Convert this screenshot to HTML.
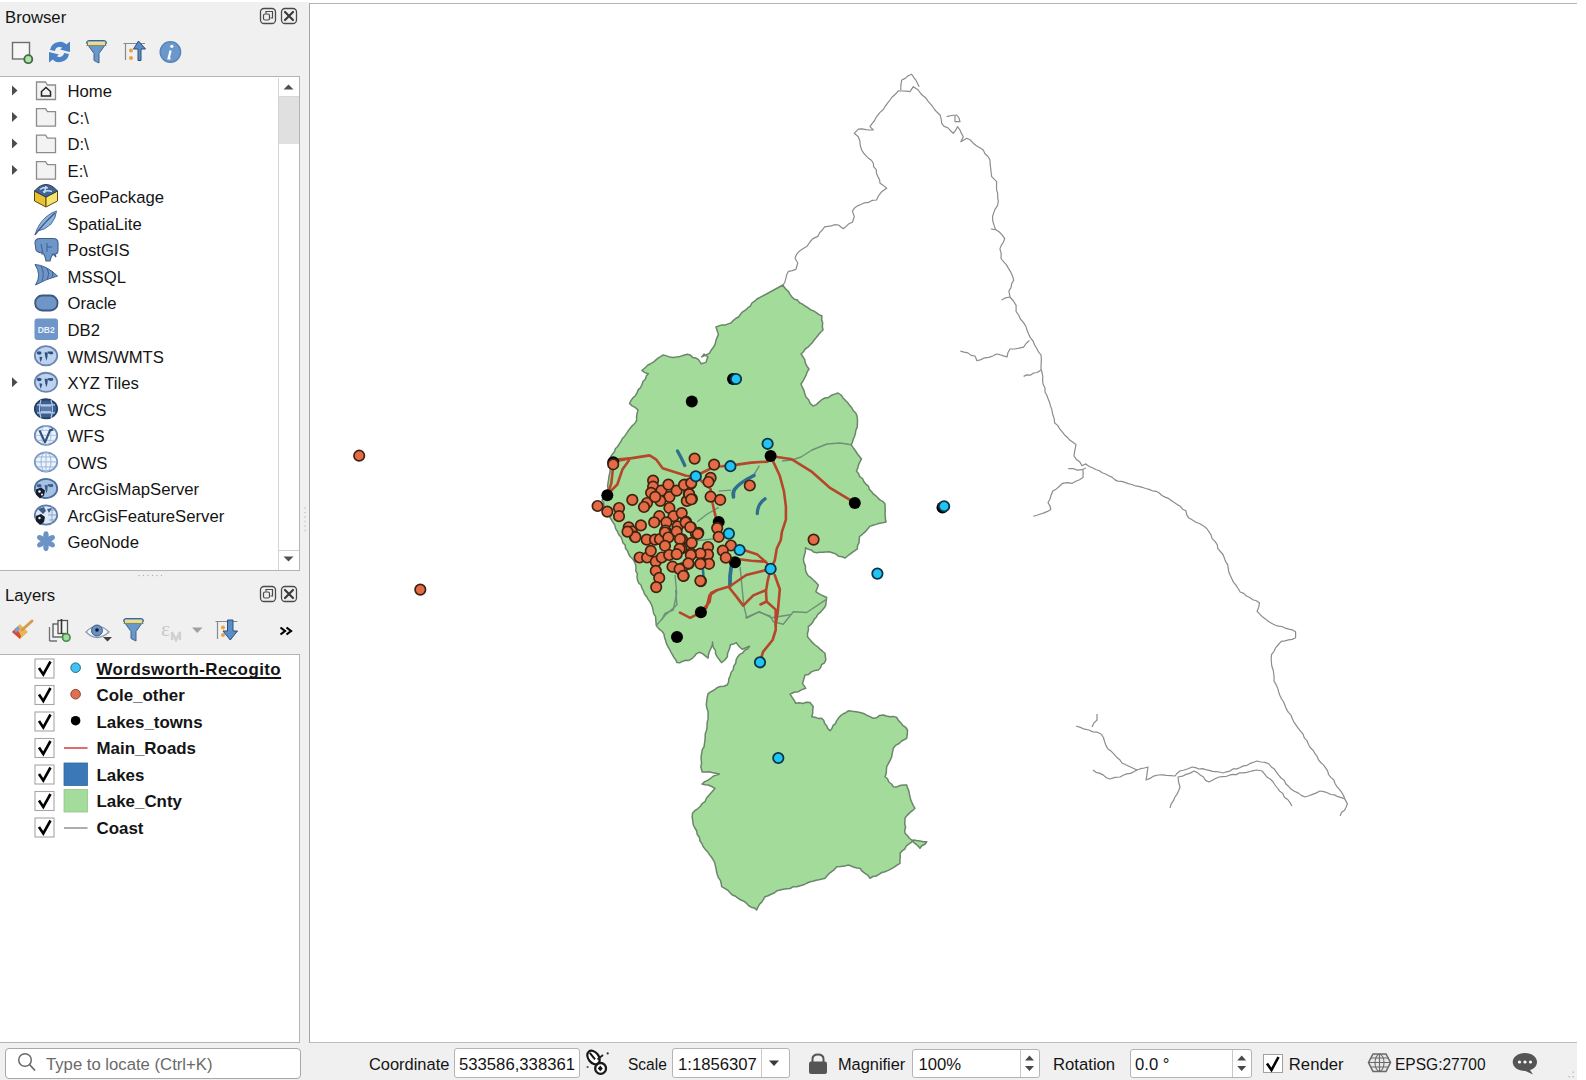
<!DOCTYPE html>
<html><head><meta charset="utf-8">
<style>
html,body{margin:0;padding:0;}
body{width:1586px;height:1080px;position:relative;overflow:hidden;background:#fff;font-family:"Liberation Sans",sans-serif;color:#141414;}
.a{position:absolute;}
.t{position:absolute;font-size:16.7px;line-height:20px;white-space:nowrap;}
.b{font-weight:bold;font-size:16.9px;}
svg{position:absolute;left:0;top:0;}
</style></head><body>
<div class="a" style="left:0;top:2px;width:309px;height:1078px;background:#f0f0f0"></div>
<div class="a" style="left:0;top:1043px;width:1577px;height:37px;background:#f0f0f0"></div>
<div class="a" style="left:309px;top:3px;width:1268px;height:1039.5px;background:#fff;border-left:1.5px solid #a6a6a6;border-top:1.8px solid #b4b4b4;border-bottom:1.8px solid #bcbcbc;box-sizing:border-box"></div>

<div class="t" style="left:5px;top:7.5px">Browser</div>
<div class="a" style="left:0;top:76px;width:300px;height:495px;background:#fff;border:1.5px solid #b4b4b4;border-left:none;box-sizing:border-box"></div>
<div class="a" style="left:278px;top:77.5px;width:20.5px;height:492px;background:#fff;border-left:1px solid #d4d4d4;box-sizing:border-box"></div>
<div class="a" style="left:279px;top:96px;width:19.5px;height:48px;background:#e0e0e0"></div>
<div class="a" style="left:279px;top:549.5px;width:19.5px;height:1px;background:#d0d0d0"></div>
<div class="a" style="left:279px;top:96px;width:19.5px;height:1px;background:#d8d8d8"></div>
<div class="t" style="left:67.5px;top:82.20px">Home</div>
<div class="t" style="left:67.5px;top:108.73px">C:\</div>
<div class="t" style="left:67.5px;top:135.26px">D:\</div>
<div class="t" style="left:67.5px;top:161.79px">E:\</div>
<div class="t" style="left:67.5px;top:188.32px">GeoPackage</div>
<div class="t" style="left:67.5px;top:214.85px">SpatiaLite</div>
<div class="t" style="left:67.5px;top:241.38px">PostGIS</div>
<div class="t" style="left:67.5px;top:267.91px">MSSQL</div>
<div class="t" style="left:67.5px;top:294.44px">Oracle</div>
<div class="t" style="left:67.5px;top:320.97px">DB2</div>
<div class="t" style="left:67.5px;top:347.50px">WMS/WMTS</div>
<div class="t" style="left:67.5px;top:374.03px">XYZ Tiles</div>
<div class="t" style="left:67.5px;top:400.56px">WCS</div>
<div class="t" style="left:67.5px;top:427.09px">WFS</div>
<div class="t" style="left:67.5px;top:453.62px">OWS</div>
<div class="t" style="left:67.5px;top:480.15px">ArcGisMapServer</div>
<div class="t" style="left:67.5px;top:506.68px">ArcGisFeatureServer</div>
<div class="t" style="left:67.5px;top:533.21px">GeoNode</div>
<div class="t" style="left:5px;top:585.5px">Layers</div>
<div class="a" style="left:0;top:654px;width:300px;height:389px;background:#fff;border:1.5px solid #b4b4b4;border-left:none;box-sizing:border-box"></div>
<div class="t b" style="left:96.5px;top:659.80px;text-decoration:underline;text-decoration-thickness:1.5px;text-underline-offset:1.5px;text-decoration-skip-ink:none;letter-spacing:0.45px;">Wordsworth-Recogito</div>
<div class="t b" style="left:96.5px;top:686.30px;">Cole_other</div>
<div class="t b" style="left:96.5px;top:712.80px;">Lakes_towns</div>
<div class="t b" style="left:96.5px;top:739.30px;">Main_Roads</div>
<div class="t b" style="left:96.5px;top:765.80px;">Lakes</div>
<div class="t b" style="left:96.5px;top:792.30px;">Lake_Cnty</div>
<div class="t b" style="left:96.5px;top:818.80px;">Coast</div>
<div class="a" style="left:5px;top:1048px;width:296px;height:31px;background:#fff;border:1.5px solid #a8a8a8;border-radius:4px;box-sizing:border-box"></div>
<div class="t" style="left:46px;top:1055px;color:#6a6a6a">Type to locate (Ctrl+K)</div>
<div class="t" style="left:368.5px;top:1055px;transform:scaleX(0.984);transform-origin:0 0">Coordinate</div>
<div class="a" style="left:453.5px;top:1048px;width:126px;height:30px;background:#fff;border:1.3px solid #b4b4b4;border-radius:3px;box-sizing:border-box"></div>
<div class="t" style="left:459px;top:1055px">533586,338361</div>
<div class="t" style="left:627.5px;top:1055px;transform:scaleX(0.93);transform-origin:0 0">Scale</div>
<div class="a" style="left:672px;top:1048px;width:118px;height:30px;background:#fff;border:1.3px solid #b4b4b4;border-radius:3px;box-sizing:border-box"></div>
<div class="a" style="left:761px;top:1049px;width:1px;height:28px;background:#c8c8c8"></div>
<div class="t" style="left:678px;top:1055px">1:1856307</div>
<div class="t" style="left:838px;top:1055px;transform:scaleX(0.98);transform-origin:0 0">Magnifier</div>
<div class="a" style="left:911.5px;top:1049px;width:128px;height:29px;background:#fff;border:1.3px solid #b4b4b4;border-radius:3px;box-sizing:border-box"></div>
<div class="a" style="left:1019.5px;top:1050px;width:1px;height:27px;background:#c8c8c8"></div>
<div class="t" style="left:918.5px;top:1055px">100%</div>
<div class="t" style="left:1053px;top:1055px">Rotation</div>
<div class="a" style="left:1130px;top:1048.5px;width:122px;height:29.5px;background:#fff;border:1.3px solid #b4b4b4;border-radius:3px;box-sizing:border-box"></div>
<div class="a" style="left:1231.5px;top:1049.5px;width:1px;height:27.5px;background:#c8c8c8"></div>
<div class="t" style="left:1135px;top:1055px">0.0 °</div>
<div class="a" style="left:1263px;top:1054px;width:19.5px;height:19px;background:#fff;border:1.3px solid #a0a0a0;box-sizing:border-box"></div>
<div class="t" style="left:1288.8px;top:1055px">Render</div>
<div class="t" style="left:1395px;top:1055px;transform:scaleX(0.93);transform-origin:0 0">EPSG:27700</div>
<svg width="1586" height="1080" viewBox="0 0 1586 1080">
<rect x="260.5" y="8.5" width="15" height="15" rx="3.5" fill="none" stroke="#4a4a4a" stroke-width="1.3"/>
<rect x="263.5" y="14" width="6" height="6" rx="1.5" fill="none" stroke="#4a4a4a" stroke-width="1.2"/>
<path d="M266 13.5 v-2 h6.5 v6.5 h-2" fill="none" stroke="#4a4a4a" stroke-width="1.2"/>
<rect x="281.5" y="8.5" width="15" height="15" rx="3.5" fill="none" stroke="#4a4a4a" stroke-width="1.3"/>
<path d="M285 12 l8 8 M293 12 l-8 8" stroke="#3a3a3a" stroke-width="2.2" stroke-linecap="round"/>
<rect x="260.5" y="586.5" width="15" height="15" rx="3.5" fill="none" stroke="#4a4a4a" stroke-width="1.3"/>
<rect x="263.5" y="592" width="6" height="6" rx="1.5" fill="none" stroke="#4a4a4a" stroke-width="1.2"/>
<path d="M266 591.5 v-2 h6.5 v6.5 h-2" fill="none" stroke="#4a4a4a" stroke-width="1.2"/>
<rect x="281.5" y="586.5" width="15" height="15" rx="3.5" fill="none" stroke="#4a4a4a" stroke-width="1.3"/>
<path d="M285 590 l8 8 M293 590 l-8 8" stroke="#3a3a3a" stroke-width="2.2" stroke-linecap="round"/>
<rect x="12.5" y="42.5" width="17" height="16.5" fill="#f6f6f6" stroke="#6e6e6e" stroke-width="1.4"/>
<circle cx="28.3" cy="59.2" r="4" fill="#b4e0b0" stroke="#3e6e40" stroke-width="1.8"/>
<path d="M52.5 50.5 A7.2 7.2 0 0 1 65.5 47.5" fill="none" stroke="#4a82c4" stroke-width="5"/>
<path d="M70 41.5 L70 52 L60 49.5 Z" fill="#4a82c4"/>
<path d="M66.5 53.5 A7.2 7.2 0 0 1 53.5 56.5" fill="none" stroke="#4a82c4" stroke-width="5"/>
<path d="M49 62.5 L49 52 L59 54.5 Z" fill="#4a82c4"/>
<path d="M86.5 43.0 Q86.5 40.5 89 40.5 H104 Q106.5 40.5 106.5 43.0 L99 53.5 V63.0 L94 60.5 V53.5 Z" fill="#6a98c8" stroke="#41638f" stroke-width="1"/>
<rect x="88" y="41.7" width="17" height="3.2" fill="#e8e090"/>
<path d="M86.5 45.5 H106.5" stroke="#8a8a5a" stroke-width="1"/>
<path d="M123.5 621.0 Q123.5 618.5 126 618.5 H141 Q143.5 618.5 143.5 621.0 L136 631.5 V641.0 L131 638.5 V631.5 Z" fill="#6a98c8" stroke="#41638f" stroke-width="1"/>
<rect x="125" y="619.7" width="17" height="3.2" fill="#e8e090"/>
<path d="M123.5 623.5 H143.5" stroke="#8a8a5a" stroke-width="1"/>
<path d="M123.5 43.5 H145 M125.5 43.5 V60" stroke="#8a8a8a" stroke-width="1.2" fill="none"/>
<circle cx="131" cy="50.5" r="2" fill="#e8a040"/><circle cx="131" cy="58" r="2" fill="#e8a040"/>
<path d="M138 60.5 V49 H133.5 L138.5 41 L145.5 49 H141 V60.5 Z" fill="#5a8cc8" stroke="#2e4e78" stroke-width="1"/>
<circle cx="170.4" cy="52" r="10.3" fill="#6a98cc" stroke="#5580b4" stroke-width="1.2"/>
<circle cx="171.8" cy="46.3" r="1.6" fill="#fff"/><path d="M170.6 50.5 L168.6 58.5 M167.5 58.5 H170.5" stroke="#fff" stroke-width="2.2"/>
<path d="M12 85.5 L17.5 90.5 L12 95.5 Z" fill="#4c4c4c"/>
<path d="M12 112.03 L17.5 117.03 L12 122.03 Z" fill="#4c4c4c"/>
<path d="M12 138.56 L17.5 143.56 L12 148.56 Z" fill="#4c4c4c"/>
<path d="M12 165.09 L17.5 170.09 L12 175.09 Z" fill="#4c4c4c"/>
<path d="M12 377.33000000000004 L17.5 382.33000000000004 L12 387.33000000000004 Z" fill="#4c4c4c"/>
<path d="M36.5 82.0 H45.5 L47.5 85.0 H55.5 V99.5 H36.5 Z" fill="#f3f3f3" stroke="#8c8c8c" stroke-width="1.3"/>
<path d="M36.5 108.53 H45.5 L47.5 111.53 H55.5 V126.03 H36.5 Z" fill="#f3f3f3" stroke="#8c8c8c" stroke-width="1.3"/>
<path d="M36.5 135.06 H45.5 L47.5 138.06 H55.5 V152.56 H36.5 Z" fill="#f3f3f3" stroke="#8c8c8c" stroke-width="1.3"/>
<path d="M36.5 161.59 H45.5 L47.5 164.59 H55.5 V179.09 H36.5 Z" fill="#f3f3f3" stroke="#8c8c8c" stroke-width="1.3"/>
<path d="M41.5 96.0 V91.5 L46 87.5 L50.5 91.5 V96.0 Z" fill="none" stroke="#222" stroke-width="1.5"/>
<path d="M34.5 191 L46 197 L46 207 L34.5 201 Z" fill="#e8c030" stroke="#5a4a10" stroke-width="1"/>
<path d="M46 197 L57.5 191 L57.5 201 L46 207 Z" fill="#f4e46a" stroke="#5a4a10" stroke-width="1"/>
<path d="M34.5 191 Q40 184.5 46 184.5 Q52 184.5 57.5 191 L46 197 Z" fill="#3f6494" stroke="#2e3e58" stroke-width="1"/>
<path d="M40 189.5 Q44 186.5 48 188 M43 192 Q47 190 52 191.5 M46 186 L44.5 193" stroke="#c8dcf4" stroke-width="1.5" fill="none"/>
<path d="M35 235 Q38 224 46 217 Q52 212 56.5 211 Q56 218 51 224 Q45 230 37.5 231 Z" fill="#8fb2de" stroke="#4d6f9e" stroke-width="1"/>
<path d="M35 235 Q43 224 55 213" stroke="#3a5680" stroke-width="1.2" fill="none"/>
<path d="M35 243 Q35 238.5 40 238.5 H53 Q58 238.5 58 243 V250 Q58 254 55 254 L56 257 L53 254 Q51 256 50 261 H46 Q45 255 43 253 Q38 253 36 250 Z" fill="#6f96c8" stroke="#3f5f8f" stroke-width="1.1"/>
<path d="M41 244 Q43 250 42 255 M47 243 V252 M47 247 H52" stroke="#3f5f8f" stroke-width="1" fill="none"/>
<path d="M35 264.5 Q46 265 57.5 276 Q46 279 35.5 285 Q42 275 35 264.5 Z" fill="#6f96c8" stroke="#3f5f8f" stroke-width="1"/>
<path d="M41 266 Q45 273 42 281 M47 268 Q50 273 47.5 279 M52 271 Q54 274 52 277" stroke="#3f5f8f" stroke-width="1" fill="none"/>
<rect x="35.2" y="295.5" width="22.3" height="15" rx="7" fill="#6f96c8" stroke="#3c5880" stroke-width="1.8"/>
<rect x="34.5" y="318.5" width="23.5" height="21.5" rx="3" fill="#6f96c8"/>
<text x="46.2" y="333" font-family="Liberation Sans" font-weight="bold" font-size="8.5" fill="#e8f0fa" text-anchor="middle">DB2</text>
<ellipse cx="46" cy="355.8" rx="11.2" ry="9.6" fill="#bcd2ee" stroke="#6a84ac" stroke-width="1.8"/>
<ellipse cx="39.2" cy="353.0" rx="2.4" ry="1.7" fill="#2f4f7f"/><path d="M39.5 356.8 L42.3 357.1 L41.6 359.8 L40.6 362.3 L39.8 359.3 Z" fill="#2f4f7f"/><path d="M44.6 352.3 L47.8 352.5 L47.4 357.3 L46.4 360.8 L45.3 356.8 Z" fill="#2f4f7f"/><path d="M47.5 351.6 L52.8 351.40000000000003 L53.3 353.8 L51 354.5 L48.3 353.6 Z" fill="#2f4f7f"/>
<ellipse cx="46" cy="382.33000000000004" rx="11.2" ry="9.6" fill="#bcd2ee" stroke="#6a84ac" stroke-width="1.8"/>
<ellipse cx="39.2" cy="379.53000000000003" rx="2.4" ry="1.7" fill="#2f4f7f"/><path d="M39.5 383.33000000000004 L42.3 383.63000000000005 L41.6 386.33000000000004 L40.6 388.83000000000004 L39.8 385.83000000000004 Z" fill="#2f4f7f"/><path d="M44.6 378.83000000000004 L47.8 379.03000000000003 L47.4 383.83000000000004 L46.4 387.33000000000004 L45.3 383.33000000000004 Z" fill="#2f4f7f"/><path d="M47.5 378.13000000000005 L52.8 377.93000000000006 L53.3 380.33000000000004 L51 381.03000000000003 L48.3 380.13000000000005 Z" fill="#2f4f7f"/>
<ellipse cx="46" cy="408.86" rx="11.2" ry="9.6" fill="#3c5f90" stroke="#263f66" stroke-width="1.8"/>
<path d="M37 404.86 H55 M37 412.86 H55" stroke="#b8d0ee" stroke-width="1.2" fill="none"/><path d="M41 399.86 Q38 408.86 41 417.86 M51 399.86 Q54 408.86 51 417.86" stroke="#b8d0ee" stroke-width="1.1" fill="none"/><rect x="41" y="405.86" width="10" height="6" fill="#587cb0"/><path d="M41 405.86 H51 M41 411.86 H51" stroke="#dfeafa" stroke-width="1"/>
<ellipse cx="46" cy="435.39" rx="11.2" ry="9.6" fill="#eaf2fb" stroke="#6c88b4" stroke-width="1.8"/>
<path d="M35.5 435.39 H56.5 M37 430.39 H55 M37 440.39 H55" stroke="#a8c0e0" stroke-width="0.9" fill="none"/><ellipse cx="46" cy="435.39" rx="5" ry="10" fill="none" stroke="#a8c0e0" stroke-width="0.9"/><path d="M39.5 430.39 L45 442.39 L50 430.39 L53 429.39" stroke="#33507a" stroke-width="2.2" fill="none" stroke-linejoin="round"/>
<ellipse cx="46" cy="461.92" rx="11.2" ry="9.6" fill="#eef4fb" stroke="#7c98c4" stroke-width="1.8"/>
<path d="M35.5 461.92 H56.5 M37 456.92 H55 M37 466.92 H55 M46 451.92 V471.92" stroke="#9cb6dc" stroke-width="1" fill="none"/><ellipse cx="46" cy="461.92" rx="5" ry="10" fill="none" stroke="#9cb6dc" stroke-width="1"/>
<ellipse cx="46" cy="488.45000000000005" rx="11.2" ry="9.6" fill="#a6c2e2" stroke="#4c6c9c" stroke-width="1.8"/>
<ellipse cx="39.2" cy="485.65000000000003" rx="2.4" ry="1.7" fill="#3e5e8c"/><path d="M39.5 489.45000000000005 L42.3 489.75000000000006 L41.6 492.45000000000005 L40.6 494.95000000000005 L39.8 491.95000000000005 Z" fill="#3e5e8c"/><path d="M44.6 484.95000000000005 L47.8 485.15000000000003 L47.4 489.95000000000005 L46.4 493.45000000000005 L45.3 489.45000000000005 Z" fill="#3e5e8c"/><path d="M47.5 484.25000000000006 L52.8 484.05000000000007 L53.3 486.45000000000005 L51 487.15000000000003 L48.3 486.25000000000006 Z" fill="#3e5e8c"/><path d="M36 489.45000000000005 L41 487.45000000000005 L45 490.45000000000005 L44 495.45000000000005 L40 498.45000000000005 L36 494.45000000000005 Z" fill="#141c2c"/><circle cx="39.5" cy="491.45000000000005" r="1.2" fill="#fff"/><circle cx="42" cy="494.45000000000005" r="1" fill="#fff"/>
<ellipse cx="46" cy="514.98" rx="11.2" ry="9.6" fill="#dce8f6" stroke="#5c7aa6" stroke-width="1.8"/>
<path d="M48 514.98 H56 M49 509.98 H55 M49 519.98 H55 M52 505.98 V523.98" stroke="#8aa8d0" stroke-width="1" fill="none"/><path d="M38 508.98 L44 506.98 L46 510.98 L43 513.98 Z M47 508.98 L52 507.98 L49 512.98 Z" fill="#3e5e8c"/><path d="M36 515.98 L41 513.98 L45 516.98 L44 521.98 L40 524.98 L36 520.98 Z" fill="#141c2c"/><circle cx="39.5" cy="517.98" r="1.2" fill="#fff"/>
<ellipse cx="46.00" cy="546.81" rx="4.4" ry="2.7" transform="rotate(90 46.00 546.81)" fill="#6a94c4"/><ellipse cx="41.15" cy="544.01" rx="4.4" ry="2.7" transform="rotate(150 41.15 544.01)" fill="#6a94c4"/><ellipse cx="41.15" cy="538.41" rx="4.4" ry="2.7" transform="rotate(210 41.15 538.41)" fill="#6a94c4"/><ellipse cx="46.00" cy="535.61" rx="4.4" ry="2.7" transform="rotate(270 46.00 535.61)" fill="#6a94c4"/><ellipse cx="50.85" cy="538.41" rx="4.4" ry="2.7" transform="rotate(330 50.85 538.41)" fill="#6a94c4"/><ellipse cx="50.85" cy="544.01" rx="4.4" ry="2.7" transform="rotate(390 50.85 544.01)" fill="#6a94c4"/>
<circle cx="46" cy="541.21" r="3" fill="#6a94c4"/>
<path d="M283.5 89.5 L288.5 84.5 L293.5 89.5 Z" fill="#505050"/>
<path d="M283.5 556.5 L288.5 561.5 L293.5 556.5 Z" fill="#505050"/>
<circle cx="139.0" cy="575.5" r="0.7" fill="#b0b0b0"/>
<circle cx="143.5" cy="575.5" r="0.7" fill="#b0b0b0"/>
<circle cx="148.0" cy="575.5" r="0.7" fill="#b0b0b0"/>
<circle cx="152.5" cy="575.5" r="0.7" fill="#b0b0b0"/>
<circle cx="157.0" cy="575.5" r="0.7" fill="#b0b0b0"/>
<circle cx="161.5" cy="575.5" r="0.7" fill="#b0b0b0"/>
<circle cx="305" cy="508.0" r="0.7" fill="#b8b8b8"/>
<circle cx="305" cy="512.5" r="0.7" fill="#b8b8b8"/>
<circle cx="305" cy="517.0" r="0.7" fill="#b8b8b8"/>
<circle cx="305" cy="521.5" r="0.7" fill="#b8b8b8"/>
<circle cx="305" cy="526.0" r="0.7" fill="#b8b8b8"/>
<circle cx="305" cy="530.5" r="0.7" fill="#b8b8b8"/>
<path d="M12 632 L20 624 L28 632 L20 639 Z" fill="#e8b850"/><path d="M12 632 L16.5 627.5 L21 636 L20 639 Z" fill="#d84a3a"/><path d="M14 630 L18 626 L20 629 L16 633 Z" fill="#7a9ad8"/>
<path d="M22 630 L32 621" stroke="#d89a50" stroke-width="3" stroke-linecap="round"/>
<path d="M49.5 641 V627 M49.5 641 H57" stroke="#707070" stroke-width="1.3" fill="none"/>
<rect x="53" y="624" width="10" height="13" fill="#f4f4f4" stroke="#555" stroke-width="1.3"/>
<rect x="58" y="620.5" width="9.5" height="13" fill="#f4f4f4" stroke="#555" stroke-width="1.3"/>
<path d="M61.5 619 V634" stroke="#333" stroke-width="1.6"/>
<circle cx="66.3" cy="637.5" r="3.8" fill="#a4d8a4" stroke="#3f8f3f" stroke-width="1.6"/>
<path d="M86 632 Q97 620 109 632 Q97 643 86 632 Z" fill="#f2f4f8" stroke="#8a96a8" stroke-width="1.2"/>
<circle cx="97" cy="630.5" r="5.5" fill="#6a90c0" stroke="#40608c" stroke-width="1"/><circle cx="97" cy="630" r="1.8" fill="#101828"/>
<path d="M103 637 H112 L107.5 641.5 Z" fill="#404040"/>
<text x="161" y="636" font-family="Liberation Serif" font-size="22" fill="#c8c8c8">ε</text>
<path d="M172 632 V640 M172 632 L176 640 L180 632 V640" stroke="#d0d0d0" stroke-width="2.4" fill="none"/>
<path d="M192 627.5 H202.5 L197.25 633 Z" fill="#a0a0a0"/>
<path d="M215.5 621.5 H237.5 M217.5 621.5 V639" stroke="#8a8a8a" stroke-width="1.2" fill="none"/>
<circle cx="223" cy="627.5" r="2" fill="#e8a040"/><circle cx="223" cy="635" r="2" fill="#e8a040"/>
<path d="M227.5 620 H233 V631 H237.5 L230.25 640 L223 631 H227.5 Z" fill="#5a8cc8" stroke="#2e4e78" stroke-width="1"/>
<path d="M280.5 627.5 L285 631 L280.5 634.5 M286.5 627.5 L291 631 L286.5 634.5" stroke="#000" stroke-width="2.2" fill="none"/>
<rect x="35" y="659.0" width="19" height="19" fill="#fff" stroke="#a6a6a6" stroke-width="1.1"/>
<path d="M39 668.0 L43.3 674.5 L50.5 661.5" stroke="#000" stroke-width="2.6" fill="none"/>
<rect x="35" y="685.5" width="19" height="19" fill="#fff" stroke="#a6a6a6" stroke-width="1.1"/>
<path d="M39 694.5 L43.3 701.0 L50.5 688.0" stroke="#000" stroke-width="2.6" fill="none"/>
<rect x="35" y="712.0" width="19" height="19" fill="#fff" stroke="#a6a6a6" stroke-width="1.1"/>
<path d="M39 721.0 L43.3 727.5 L50.5 714.5" stroke="#000" stroke-width="2.6" fill="none"/>
<rect x="35" y="738.5" width="19" height="19" fill="#fff" stroke="#a6a6a6" stroke-width="1.1"/>
<path d="M39 747.5 L43.3 754.0 L50.5 741.0" stroke="#000" stroke-width="2.6" fill="none"/>
<rect x="35" y="765.0" width="19" height="19" fill="#fff" stroke="#a6a6a6" stroke-width="1.1"/>
<path d="M39 774.0 L43.3 780.5 L50.5 767.5" stroke="#000" stroke-width="2.6" fill="none"/>
<rect x="35" y="791.5" width="19" height="19" fill="#fff" stroke="#a6a6a6" stroke-width="1.1"/>
<path d="M39 800.5 L43.3 807.0 L50.5 794.0" stroke="#000" stroke-width="2.6" fill="none"/>
<rect x="35" y="818.0" width="19" height="19" fill="#fff" stroke="#a6a6a6" stroke-width="1.1"/>
<path d="M39 827.0 L43.3 833.5 L50.5 820.5" stroke="#000" stroke-width="2.6" fill="none"/>
<circle cx="75.6" cy="667.7" r="4.8" fill="#3ec4f2" stroke="#1c5a7a" stroke-width="0.9"/>
<circle cx="75.6" cy="694.2" r="4.8" fill="#e07050" stroke="#7a3a28" stroke-width="0.9"/>
<circle cx="75.6" cy="720.7" r="4.8" fill="#000"/>
<path d="M64 748 H87.5" stroke="#d04a4a" stroke-width="1.6"/>
<rect x="64" y="763" width="23.5" height="22.5" fill="#3a78b8" stroke="#3468a0" stroke-width="0.8"/>
<rect x="64" y="789.5" width="23.5" height="22.5" fill="#a4dc9c" stroke="#94c48c" stroke-width="0.8"/>
<path d="M64 828 H87.5" stroke="#8a8a8a" stroke-width="1.4"/>
<circle cx="25" cy="1060" r="6.3" fill="none" stroke="#6a6a6a" stroke-width="1.5"/><path d="M29.5 1064.5 L35 1070.5" stroke="#6a6a6a" stroke-width="1.8"/>
<g transform="rotate(-38 593.5 1057.5)"><ellipse cx="593.5" cy="1057.5" rx="5.2" ry="7.6" fill="#fff" stroke="#151515" stroke-width="2.2"/><path d="M593.5 1051.5 V1060" stroke="#151515" stroke-width="2"/></g>
<circle cx="600.6" cy="1068.4" r="5.4" fill="#fff" stroke="#1a1a1a" stroke-width="2.3"/>
<path d="M600.3 1065.6 L602.8 1068.4 L600.3 1071.2 L597.8 1068.4 Z" fill="#111"/>
<path d="M597.5 1059.5 L603 1055" stroke="#222" stroke-width="1.8"/>
<circle cx="607.7" cy="1053.4" r="1.1" fill="#333"/><circle cx="587.6" cy="1067" r="1.1" fill="#555"/>
<path d="M769 1060.5 H779 L774 1066 Z" fill="#3a3a3a"/>
<path d="M812.5 1062 V1059 Q812.5 1054.5 818 1054.5 Q823.5 1054.5 823.5 1059 V1062" fill="none" stroke="#555" stroke-width="2"/>
<rect x="809" y="1061.5" width="18" height="12.5" rx="2" fill="#555"/>
<path d="M1025.0 1060.5 L1029.5 1055.5 L1034.0 1060.5 Z M1025.0 1066 L1029.5 1071 L1034.0 1066 Z" fill="#4a4a4a"/>
<path d="M1237.2 1060.5 L1241.7 1055.5 L1246.2 1060.5 Z M1237.2 1066 L1241.7 1071 L1246.2 1066 Z" fill="#4a4a4a"/>
<path d="M1267 1063.5 L1271.5 1070 L1278.5 1057" stroke="#000" stroke-width="2.6" fill="none"/>
<path d="M1368.5 1062.5 L1373 1054 H1386 L1390.5 1062.5 L1386 1071.5 H1373 Z" fill="#e8e8e8" stroke="#6a6a6a" stroke-width="1.6"/>
<path d="M1369 1062.5 H1390 M1371 1058 H1388 M1371 1067 H1388 M1379.5 1054 V1071.5" stroke="#6a6a6a" stroke-width="1.1" fill="none"/><ellipse cx="1379.5" cy="1062.7" rx="4.5" ry="8.5" fill="none" stroke="#6a6a6a" stroke-width="1.1"/>
<path d="M1525 1053 C1532 1053 1537 1057 1537 1062 C1537 1066 1534 1069 1530 1070 L1533 1074.5 L1525.5 1071 C1518 1071 1512.7 1067 1512.7 1062 C1512.7 1057 1518 1053 1525 1053 Z" fill="#555"/>
<circle cx="1519.5" cy="1062" r="1.6" fill="#fff"/><circle cx="1525" cy="1062" r="1.6" fill="#fff"/><circle cx="1530.5" cy="1062" r="1.6" fill="#fff"/>
<rect x="1568.5" y="1076" width="1.5" height="1.5" fill="#c0c0c0"/>
<rect x="1572.5" y="1076" width="1.5" height="1.5" fill="#c0c0c0"/>
<rect x="1572.5" y="1071.5" width="1.5" height="1.5" fill="#c0c0c0"/>
<defs><clipPath id="mc"><rect x="310.5" y="4.5" width="1266.5" height="1036"/></clipPath></defs>
<g clip-path="url(#mc)">
<path d="M783.0 285.0 L784.8 282.4 L785.8 278.6 L786.7 274.8 L788.5 271.3 L792.3 270.6 L795.9 269.4 L797.8 263.0 L795.0 258.3 L796.7 254.2 L799.6 250.9 L803.3 248.6 L807.0 246.3 L809.6 242.5 L812.6 238.9 L818.1 236.1 L819.7 232.6 L822.4 230.0 L824.6 226.9 L831.1 225.9 L834.7 224.7 L838.5 225.0 L843.1 228.7 L846.1 226.4 L848.9 223.8 L852.4 222.2 L854.3 216.7 L852.4 211.1 L854.3 208.3 L857.4 205.9 L861.0 204.5 L864.4 202.8 L868.6 202.4 L872.3 200.3 L876.5 200.0 L878.7 195.6 L881.7 191.7 L886.7 188.3 L883.5 185.6 L880.0 183.3 L879.6 179.7 L877.9 176.6 L876.5 173.4 L876.3 169.7 L873.7 166.9 L873.3 163.3 L871.4 160.3 L868.4 158.2 L865.9 155.7 L863.6 153.1 L861.7 150.0 L860.3 145.6 L859.9 141.0 L858.3 136.7 L854.2 133.3 L858.3 129.2 L862.1 128.9 L865.8 129.7 L869.5 130.0 L873.3 130.0 L870.0 126.7 L872.0 123.7 L874.3 121.0 L875.9 117.7 L878.0 114.8 L880.3 112.1 L883.1 109.7 L885.0 106.7 L887.4 103.3 L890.0 100.0 L892.5 96.7 L895.6 94.0 L898.3 90.8 L902.2 91.0 L906.1 91.1 L910.0 91.7 L913.3 86.7 L918.3 90.0 L920.3 93.0 L922.7 95.5 L925.6 97.7 L927.6 100.7 L930.0 103.3 L932.5 106.3 L934.5 109.5 L937.2 112.3 L940.0 115.0 L941.2 119.1 L941.7 123.3 L944.1 126.4 L947.9 127.8 L950.5 130.7 L953.3 133.3 L955.7 130.2 L957.5 126.7 L959.9 129.8 L961.4 133.4 L963.3 136.7 L960.8 141.7 L966.7 138.3 L970.4 140.0 L973.2 143.2 L976.4 145.7 L979.9 147.8 L983.3 150.0 L985.0 153.7 L988.0 156.5 L990.0 160.0 L990.1 164.2 L990.7 168.4 L991.1 172.5 L991.7 176.7 L994.2 179.2 L996.7 181.7 L996.5 185.7 L996.6 189.8 L997.7 193.7 L997.7 197.7 L998.3 201.7 L997.5 205.7 L995.1 209.1 L993.7 212.9 L992.5 216.7 L992.8 221.2 L994.1 225.4 L995.6 229.6 L999.3 232.0 L1002.3 235.1 L1004.7 238.7 L1003.3 242.2 L1001.3 245.4 L999.9 248.9 L1001.2 253.6 L1001.0 258.5 L1003.5 261.7 L1006.3 264.6 L1008.3 268.1 L1010.7 271.9 L1012.5 275.9 L1013.7 280.2 L1011.7 283.6 L1011.0 287.6 L1008.9 291.0 L1010.0 297.0 L1013.4 301.0 L1016.1 305.4 L1016.1 311.5 L1018.6 315.0 L1020.4 319.0 L1023.3 322.3 L1025.7 325.9 L1027.0 330.1 L1028.6 334.0 L1030.5 337.9 L1033.0 341.0 L1034.5 344.8 L1036.6 348.3 L1038.5 351.8 L1041.0 355.0 L1041.4 359.5 L1041.1 364.1 L1041.0 368.6 L1042.0 372.5 L1042.8 376.4 L1042.6 380.4 L1043.1 384.3 L1045.0 388.0 L1045.0 392.0 L1046.8 395.3 L1048.1 398.8 L1049.5 402.3 L1050.5 405.9 L1051.8 409.4 L1052.6 414.0 L1054.1 418.4 L1054.7 423.0 L1057.7 425.4 L1059.6 428.8 L1062.1 431.6 L1064.4 434.7 L1067.2 437.2 L1069.7 440.1 L1072.9 442.2 L1076.0 444.4 L1075.3 448.3 L1074.5 452.1 L1074.0 456.0 L1076.4 459.4 L1079.9 462.1 L1082.0 465.8 L1085.8 463.9 L1088.9 466.2 L1092.4 467.7 L1095.7 469.5 L1099.4 470.7 L1102.2 472.8 L1105.6 474.0 L1108.7 475.8 L1112.0 477.1 L1114.6 479.6 L1117.8 481.1 L1121.5 481.4 L1124.9 482.4 L1128.3 483.6 L1131.8 484.5 L1135.2 485.8 L1138.7 486.4 L1142.2 487.3 L1145.6 488.5 L1149.1 489.4 L1152.4 490.8 L1156.1 491.3 L1159.3 493.0 L1161.9 495.5 L1165.1 497.1 L1168.5 498.4 L1171.3 500.5 L1174.2 502.6 L1177.2 504.6 L1180.3 506.3 L1182.6 509.2 L1185.9 510.7 L1186.7 514.7 L1188.9 518.1 L1192.5 520.1 L1196.0 522.2 L1199.9 523.8 L1203.5 525.9 L1206.7 528.5 L1208.9 531.7 L1211.0 534.9 L1212.1 538.6 L1215.0 541.4 L1217.2 544.6 L1217.9 548.6 L1220.4 551.5 L1222.9 554.5 L1224.4 558.1 L1225.6 561.5 L1227.7 564.6 L1228.2 568.3 L1228.8 572.0 L1230.2 575.3 L1231.7 578.6 L1233.3 581.9 L1235.9 585.1 L1238.1 588.5 L1240.2 592.0 L1243.7 593.4 L1246.4 596.0 L1249.8 597.5 L1252.8 599.7 L1256.4 600.8 L1259.5 602.9 L1258.7 607.2 L1257.1 611.3 L1259.7 614.1 L1262.4 616.7 L1265.4 618.9 L1268.3 621.3 L1271.5 623.3 L1274.8 625.0 L1278.3 626.1 L1282.0 626.5 L1285.3 628.2 L1288.8 629.2 L1292.4 629.9 L1295.6 631.8 L1295.6 637.8 L1292.2 639.4 L1288.5 639.9 L1284.9 640.9 L1281.2 641.4 L1278.5 644.5 L1275.8 647.6 L1274.0 651.3 L1271.5 654.6 L1271.2 658.5 L1271.4 662.2 L1271.8 666.0 L1273.1 669.7 L1273.7 673.5 L1274.1 677.3 L1274.0 681.1 L1276.0 684.4 L1277.6 687.9 L1278.6 691.6 L1279.8 695.3 L1281.5 698.7 L1283.6 702.0 L1285.0 705.5 L1286.4 709.1 L1288.4 712.4 L1291.0 715.2 L1292.3 718.8 L1294.0 722.2 L1296.2 725.3 L1298.3 728.4 L1300.7 731.3 L1303.1 734.2 L1304.3 737.9 L1307.0 740.6 L1308.4 744.2 L1310.2 747.5 L1313.0 750.2 L1314.9 753.4 L1317.1 756.3 L1318.4 759.7 L1320.7 762.5 L1323.5 764.9 L1325.6 767.9 L1327.6 770.9 L1328.6 774.5 L1330.8 777.4 L1333.7 779.7 L1334.9 783.3 L1336.7 786.4 L1339.2 789.1 L1341.4 791.9 L1343.6 795.8 L1345.3 799.9 L1347.4 803.9 L1346.1 807.2 L1344.5 810.3 L1341.4 812.6 L1340.2 816.0" fill="none" stroke="#8c8c8c" stroke-width="1.2" stroke-linejoin="round"/>
<path d="M1345.0 799.0 L1341.5 797.6 L1337.9 796.7 L1334.5 794.9 L1330.7 794.5 L1327.3 792.7 L1323.7 791.6 L1320.0 791.0 L1316.4 792.9 L1312.6 794.4 L1308.9 795.8 L1305.0 797.0 L1301.3 795.4 L1298.1 792.9 L1294.3 791.3 L1291.0 789.0 L1288.5 786.3 L1285.7 783.8 L1284.2 780.2 L1281.0 778.0 L1278.7 775.2 L1276.4 772.2 L1274.4 769.1 L1271.3 766.9 L1269.0 764.0 L1265.2 762.4 L1261.0 762.0 L1257.0 761.0 L1253.6 762.2 L1250.2 763.4 L1247.1 765.3 L1243.4 765.9 L1240.2 767.5 L1236.9 768.9 L1233.0 768.9 L1230.0 771.1 L1226.4 771.8 L1223.0 773.0 L1219.6 772.0 L1216.1 771.6 L1212.6 771.3 L1209.2 770.3 L1205.8 769.6 L1202.4 768.6 L1198.8 769.0 L1195.5 767.6 L1192.0 767.0 L1188.1 768.7 L1184.1 770.0 L1180.0 771.0 L1177.2 773.2 L1175.0 776.0 L1170.8 775.7 L1166.5 775.4 L1162.3 774.8 L1158.0 775.0 L1153.7 776.1 L1150.0 778.4 L1146.0 780.0 L1146.8 775.7 L1147.3 771.3 L1148.0 767.0 L1144.3 768.0 L1140.6 768.7 L1137.0 770.0 L1133.2 768.3 L1129.5 766.5 L1125.7 764.8 L1122.0 763.0 L1119.7 759.7 L1116.6 757.2 L1114.0 754.2 L1111.3 751.3 L1108.0 749.0 L1105.9 745.4 L1104.6 741.5 L1103.4 737.5 L1101.0 734.0 L1097.2 732.2 L1092.8 731.9 L1089.0 730.0 L1084.5 729.2 L1080.3 727.4 L1076.0 726.0" fill="none" stroke="#8c8c8c" stroke-width="1.2" stroke-linejoin="round"/>
<path d="M1092.0 727.0 L1093.9 723.1 L1097.0 720.0 L1097.0 714.0" fill="none" stroke="#8c8c8c" stroke-width="1.2" stroke-linejoin="round"/>
<path d="M1137.0 770.0 L1133.8 771.8 L1130.5 773.4 L1126.7 773.9 L1123.2 775.2 L1120.0 777.0 L1114.9 777.4 L1110.0 779.0 L1106.3 777.7 L1103.4 775.1 L1099.9 773.4 L1096.1 772.3 L1093.0 770.0" fill="none" stroke="#8c8c8c" stroke-width="1.2" stroke-linejoin="round"/>
<path d="M1292.0 806.0 L1290.0 802.6 L1287.7 799.5 L1284.4 797.3 L1282.8 793.5 L1279.7 791.1 L1277.4 788.0 L1275.0 785.0 L1273.0 781.7 L1270.2 779.0 L1266.8 777.0 L1264.5 773.9 L1262.0 771.0 L1257.0 770.0 L1253.5 770.6 L1250.1 771.5 L1246.7 772.4 L1243.2 772.8 L1239.7 772.8 L1236.4 774.6 L1232.8 774.4 L1229.4 775.2 L1226.0 776.5 L1222.5 776.6 L1219.0 777.0 L1215.6 778.5 L1212.3 780.3 L1209.0 782.0 L1205.6 780.4 L1203.5 777.0 L1200.3 775.0 L1197.4 772.6 L1194.0 771.0 L1190.2 773.1 L1186.1 774.4 L1182.3 776.2 L1178.0 777.0 L1178.6 782.1 L1180.0 787.0 L1178.7 790.5 L1177.2 793.9 L1175.0 797.0 L1173.4 800.7 L1171.1 804.1 L1170.0 808.0" fill="none" stroke="#8c8c8c" stroke-width="1.2" stroke-linejoin="round"/>
<path d="M1029.4 340.4 L1026.1 343.5 L1023.6 347.2 L1019.1 348.2 L1014.6 349.0 L1010.0 349.0 L1007.9 352.8 L1007.0 357.0 L1003.5 355.9 L1000.0 354.7 L996.4 354.0 L992.7 356.0 L988.9 357.4 L984.7 357.8 L980.9 359.6 L977.0 360.8 L975.0 356.0 L971.1 355.4 L967.9 352.9 L964.1 352.1 L960.4 351.1" fill="none" stroke="#8c8c8c" stroke-width="1.2" stroke-linejoin="round"/>
<path d="M1041.0 370.0 L1037.2 372.5 L1033.7 373.0 L1030.6 375.1 L1026.8 374.9 L1023.6 376.4" fill="none" stroke="#8c8c8c" stroke-width="1.2" stroke-linejoin="round"/>
<path d="M1085.8 468.0 L1082.0 469.7 L1077.4 470.1 L1072.9 468.5 L1068.3 468.7" fill="none" stroke="#8c8c8c" stroke-width="1.2" stroke-linejoin="round"/>
<path d="M1083.0 470.0 L1083.1 473.8 L1083.0 477.5 L1079.5 479.7 L1075.8 481.3 L1072.2 483.3 L1067.3 482.6 L1062.5 483.3 L1059.5 486.2 L1056.4 488.9 L1052.8 491.0 L1051.2 494.9 L1050.0 499.0 L1048.0 502.7 L1050.0 505.9 L1050.8 509.5 L1047.5 511.4 L1044.1 512.9 L1040.5 514.0 L1036.9 515.2 L1033.3 516.3" fill="none" stroke="#8c8c8c" stroke-width="1.2" stroke-linejoin="round"/>
<path d="M900.8 90.0 L900.9 85.0 L901.7 80.0 L905.2 78.4 L908.2 75.8 L911.7 74.2 L913.6 77.3 L915.9 80.2 L917.5 83.4 L919.2 86.7" fill="none" stroke="#8c8c8c" stroke-width="1.2" stroke-linejoin="round"/>
<path d="M990.8 229.0 L995.6 229.6" fill="none" stroke="#8c8c8c" stroke-width="1.2" stroke-linejoin="round"/>
<path d="M1001.7 300.0 L1005.6 297.8 L1010.0 297.0" fill="none" stroke="#8c8c8c" stroke-width="1.2" stroke-linejoin="round"/>
<path d="M946.7 116.7 L951.6 115.5 L956.7 115.0 L959.0 118.0 L960.0 121.7 L955.0 121.7 L955.0 116.0" fill="none" stroke="#8c8c8c" stroke-width="1.2" stroke-linejoin="round"/>
<path d="M783.0 285.0 L784.5 287.6 L786.5 289.8 L788.7 291.9 L790.2 294.6 L792.0 297.0 L794.3 299.3 L797.5 300.1 L799.5 302.8 L802.5 304.1 L805.0 306.0 L807.8 307.7 L810.4 309.7 L813.6 310.9 L816.3 312.7 L819.0 314.6 L822.0 316.0 L821.6 319.5 L822.7 323.0 L822.3 326.5 L823.0 330.0 L820.6 332.2 L818.5 334.7 L816.5 337.3 L814.4 339.7 L812.5 342.4 L810.2 344.8 L808.0 347.2 L805.2 349.0 L803.5 351.8 L801.0 354.0 L803.0 356.8 L804.7 359.7 L805.4 363.2 L806.9 366.2 L809.0 369.0 L807.2 371.9 L806.1 375.1 L804.5 378.2 L802.9 381.1 L801.0 384.0 L802.3 387.2 L803.9 390.3 L804.8 393.7 L806.0 397.0 L808.6 399.8 L810.2 403.4 L813.0 406.0 L816.4 404.6 L819.0 402.1 L821.8 399.7 L825.0 398.0 L828.5 397.4 L831.4 395.3 L834.7 394.1 L838.0 393.0 L841.0 395.0 L843.1 397.9 L845.5 400.5 L848.0 403.0 L849.8 405.6 L851.9 408.0 L853.4 410.8 L855.8 413.0 L857.0 416.0 L857.5 420.2 L857.4 424.5 L857.1 427.6 L855.8 430.3 L855.4 433.4 L854.6 436.3 L853.3 439.1 L852.5 442.0 L851.3 444.8 L853.2 447.7 L855.3 450.5 L857.1 453.5 L859.3 456.3 L861.5 459.0 L859.9 461.9 L858.5 464.8 L857.8 468.1 L856.4 471.0 L858.5 473.4 L859.7 476.6 L862.5 478.5 L863.8 481.5 L865.8 484.1 L868.4 486.1 L869.4 489.4 L871.7 491.7 L873.5 494.2 L876.0 495.9 L878.1 498.1 L880.3 500.2 L883.1 501.6 L885.0 504.0 L885.1 507.0 L885.3 510.0 L885.0 513.0 L885.2 516.0 L885.4 519.0 L886.0 522.0 L882.7 522.8 L879.3 523.2 L876.2 524.4 L872.9 525.3 L869.7 526.4 L867.4 529.2 L865.1 531.9 L862.4 534.3 L859.5 536.5 L859.2 539.6 L859.0 542.7 L857.5 545.6 L857.4 548.8 L854.9 550.6 L852.4 552.3 L850.0 554.2 L847.5 556.0 L845.2 558.0 L842.0 556.8 L838.5 556.2 L835.6 553.9 L832.4 552.7 L829.0 551.8 L825.9 552.0 L822.8 552.3 L819.8 552.3 L816.7 552.8 L813.6 552.1 L811.2 549.9 L808.2 549.3 L805.5 547.7 L805.4 551.6 L804.4 555.3 L803.4 559.0 L803.9 562.6 L805.4 565.9 L805.4 569.6 L806.5 573.0 L808.3 575.8 L811.0 577.7 L813.3 580.0 L815.9 582.4 L818.3 585.0 L817.1 588.4 L815.8 591.7 L818.4 593.4 L821.1 594.9 L823.9 596.2 L826.7 597.5 L826.1 601.2 L825.8 605.0 L824.3 607.8 L822.3 610.1 L820.2 612.4 L817.8 614.4 L816.3 617.2 L814.1 619.4 L812.7 622.3 L810.7 624.7 L808.3 626.7 L808.4 630.1 L807.5 633.3 L807.5 636.7 L809.8 639.6 L812.3 642.4 L815.0 645.0 L817.7 646.8 L820.0 649.2 L822.5 651.2 L825.0 653.3 L825.4 656.6 L825.8 660.0 L824.4 662.8 L821.6 664.7 L820.5 667.8 L818.3 670.0 L814.7 670.6 L811.4 671.9 L808.6 674.4 L805.0 675.0 L803.8 679.2 L802.5 683.3 L805.8 688.3 L801.9 689.6 L798.3 691.7 L794.0 692.3 L790.0 694.2 L792.0 697.2 L794.1 700.1 L795.8 703.3 L799.3 702.7 L802.9 703.5 L806.4 702.3 L810.0 702.5 L813.3 706.7 L812.7 710.0 L812.7 713.4 L811.7 716.7 L815.0 717.3 L818.3 718.4 L821.7 718.3 L823.8 720.5 L824.6 723.5 L826.7 725.8 L827.9 728.6 L830.0 730.8 L831.9 728.5 L833.0 725.6 L835.4 723.6 L836.6 720.8 L838.3 718.3 L840.4 715.9 L842.9 714.0 L845.8 712.7 L848.3 710.8 L852.2 711.3 L856.1 711.7 L860.0 712.5 L863.5 713.5 L866.7 715.2 L870.1 716.6 L873.3 718.3 L876.8 717.7 L879.7 715.4 L883.3 715.0 L886.6 716.0 L889.9 716.7 L893.4 716.4 L896.7 717.5 L898.4 720.4 L900.8 722.7 L902.8 725.4 L905.6 727.3 L907.5 730.0 L907.3 734.2 L906.7 738.3 L901.7 741.0 L899.0 743.5 L895.6 745.3 L893.3 748.3 L892.4 752.5 L891.7 756.7 L890.2 760.1 L888.5 763.4 L886.7 766.7 L886.4 770.1 L886.2 773.5 L885.0 776.7 L887.5 778.8 L888.8 782.0 L891.5 784.0 L893.3 786.7 L896.7 786.9 L900.0 785.5 L903.3 785.1 L906.7 785.0 L907.5 787.9 L908.8 790.7 L909.3 793.7 L910.0 796.7 L910.7 799.9 L912.0 802.7 L913.3 805.6 L915.0 808.3 L912.4 810.7 L909.6 812.9 L907.1 815.4 L905.0 818.3 L904.9 821.3 L904.7 824.3 L905.6 827.3 L904.7 830.3 L905.0 833.3 L907.3 835.5 L909.2 838.0 L911.7 840.0 L914.3 842.9 L917.4 845.3 L920.0 848.3 L921.8 845.7 L924.9 844.3 L926.7 841.7 L923.3 841.8 L920.0 840.9 L916.6 840.6 L913.3 840.0 L911.3 842.4 L908.6 844.2 L906.2 846.2 L904.7 849.1 L902.1 850.9 L900.0 853.3 L900.3 856.6 L899.9 860.0 L900.0 863.3 L897.1 865.1 L894.2 867.1 L891.2 868.8 L888.2 870.4 L885.0 871.7 L881.8 872.5 L879.0 874.3 L876.2 876.0 L872.8 876.5 L870.0 878.3 L868.0 875.3 L865.0 873.3 L862.1 871.2 L860.0 868.3 L857.0 867.9 L854.0 867.2 L851.2 866.0 L848.3 865.0 L844.5 866.1 L840.6 866.5 L836.7 866.7 L834.6 869.3 L832.0 871.3 L829.3 873.3 L827.1 875.7 L825.0 878.3 L822.0 879.1 L819.0 879.8 L816.0 880.3 L813.0 881.2 L810.0 881.7 L806.8 883.2 L803.6 884.8 L800.1 885.7 L796.7 886.7 L793.2 886.7 L790.1 888.5 L786.7 888.7 L783.3 889.2 L780.0 890.0 L776.8 890.9 L774.2 893.0 L771.1 894.3 L768.1 895.7 L765.0 896.7 L763.5 899.4 L761.7 902.1 L759.5 904.3 L757.9 907.1 L756.7 910.0 L754.4 907.9 L751.1 907.2 L748.5 905.5 L746.3 903.1 L743.9 901.2 L740.9 900.0 L738.3 898.3 L735.6 896.3 L732.4 895.0 L729.9 892.6 L727.6 890.1 L724.7 888.3 L721.7 886.7 L721.2 883.6 L720.5 880.6 L718.6 877.9 L717.4 875.0 L716.6 872.0 L716.1 868.9 L715.4 865.9 L714.8 862.8 L713.3 860.0 L711.5 857.2 L709.5 854.6 L707.6 851.8 L705.3 849.4 L703.3 846.7 L701.9 843.6 L699.9 840.8 L699.4 837.2 L697.2 834.5 L696.7 831.0 L694.9 828.0 L693.3 825.0 L692.8 821.1 L692.2 817.2 L692.5 813.3 L694.8 810.7 L697.6 808.8 L700.2 806.5 L702.1 803.6 L705.0 801.7 L706.6 798.0 L709.2 795.0 L712.1 791.7 L715.0 788.3 L711.7 786.5 L708.3 785.0 L705.1 784.7 L702.0 784.0 L704.8 781.7 L708.1 780.1 L711.0 778.0 L713.5 776.0 L716.5 775.1 L719.5 774.0 L715.7 773.3 L712.0 772.5 L708.8 771.7 L705.5 772.0 L702.2 772.0 L700.8 766.7 L701.6 763.4 L701.2 760.0 L701.1 756.6 L701.7 753.3 L702.2 749.9 L704.0 746.8 L704.5 743.4 L705.0 740.0 L705.2 736.9 L705.2 733.9 L706.3 731.0 L707.0 728.0 L707.1 724.9 L707.3 721.9 L708.1 718.9 L708.1 715.3 L708.1 711.7 L706.9 708.2 L706.3 704.7 L706.7 701.1 L707.2 697.4 L708.1 693.7 L711.0 691.6 L714.2 690.0 L717.0 687.8 L720.3 686.4 L724.0 686.2 L727.4 684.8 L728.5 681.9 L728.9 678.9 L730.2 675.7 L731.1 672.4 L733.3 669.6 L733.7 666.1 L735.7 663.2 L736.2 659.7 L737.8 656.7 L739.9 654.3 L742.8 652.8 L744.7 650.2 L747.7 648.9 L749.6 646.3 L745.9 647.8 L742.2 649.3 L738.9 646.2 L736.3 642.6 L733.5 644.1 L730.4 644.8 L729.8 647.8 L728.7 650.7 L727.5 653.6 L727.4 656.7 L724.8 660.0 L721.5 662.6 L719.4 659.7 L717.2 656.9 L715.6 653.7 L715.5 650.6 L713.6 647.9 L712.7 645.0 L712.6 641.9 L712.3 645.3 L710.9 648.4 L709.4 651.5 L708.5 654.7 L708.1 658.1 L705.3 655.9 L702.6 653.6 L699.3 652.2 L696.3 653.8 L694.2 656.5 L691.8 658.7 L688.9 660.4 L685.8 660.3 L682.9 661.2 L680.1 662.7 L677.0 662.6 L675.7 659.8 L673.9 657.4 L672.4 654.7 L670.9 652.1 L669.6 649.3 L667.9 646.5 L666.5 643.6 L665.6 640.5 L664.5 637.5 L664.0 634.2 L662.2 631.5 L658.9 628.9 L656.3 625.6 L655.8 620.0 L655.6 616.7 L653.8 613.9 L653.1 610.7 L652.5 607.5 L651.4 604.6 L650.0 601.9 L648.1 599.4 L646.7 596.7 L644.6 594.2 L643.6 591.2 L641.9 588.4 L641.1 585.3 L638.7 583.0 L637.5 580.0 L637.0 577.0 L637.4 573.9 L635.8 571.1 L636.0 568.0 L635.8 565.0 L634.5 561.9 L632.8 559.1 L630.3 556.8 L628.6 554.0 L627.5 550.8 L625.5 548.4 L625.2 545.1 L622.9 542.8 L622.1 539.7 L620.9 536.9 L618.7 534.5 L617.5 531.7 L615.6 528.7 L614.8 525.1 L612.8 522.1 L611.0 519.0 L609.4 516.4 L608.7 513.4 L606.9 511.0 L605.6 508.3 L603.9 505.7 L603.6 502.6 L602.0 500.0 L604.0 497.5 L605.2 494.6 L607.0 492.0 L608.0 489.0 L607.6 485.7 L608.1 482.5 L608.7 479.2 L609.0 476.0 L609.9 472.8 L610.2 469.6 L609.7 466.3 L609.8 463.1 L610.3 459.9 L610.7 456.7 L612.4 454.1 L614.5 451.8 L615.3 448.7 L617.7 446.5 L619.3 443.9 L621.1 441.3 L622.4 438.5 L624.7 436.2 L626.6 433.4 L628.3 430.6 L630.4 428.0 L632.5 425.5 L635.0 423.2 L636.7 420.4 L636.5 416.9 L637.1 413.4 L638.0 410.0 L635.4 407.6 L632.1 405.9 L629.5 403.5 L631.0 400.5 L632.9 397.9 L635.4 395.7 L637.0 392.9 L638.2 389.9 L640.6 387.5 L642.0 384.6 L643.0 381.5 L645.3 379.3 L646.3 376.1 L648.3 373.7 L644.8 372.6 L641.9 370.5 L645.7 367.2 L647.9 365.0 L650.7 363.7 L653.4 362.2 L655.7 360.1 L658.0 358.1 L660.6 356.6 L663.2 354.9 L666.4 355.9 L669.7 356.9 L673.0 357.5 L676.6 357.0 L680.2 356.4 L683.7 355.3 L687.2 354.3 L690.3 355.1 L692.6 357.4 L695.8 358.0 L698.5 359.6 L701.3 363.8 L705.9 362.4 L707.8 356.9 L704.0 354.1 L701.8 356.9 L705.7 355.1 L709.6 353.1 L711.3 349.9 L713.6 347.1 L715.2 343.9 L715.9 340.7 L717.0 337.6 L718.4 334.6 L717.0 330.0 L716.0 327.0 L718.9 325.9 L721.9 324.9 L725.1 325.1 L728.0 323.9 L731.0 323.0 L733.2 320.6 L735.6 318.5 L738.6 317.0 L740.5 314.3 L742.6 311.8 L745.5 310.2 L747.7 307.9 L750.4 306.1 L751.9 303.0 L754.6 301.2 L757.0 299.0 Z" fill="#a3dc9a" stroke="#6a866a" stroke-width="1.5" stroke-linejoin="round"/>
<path d="M851.3 444.8 L840.0 443.0 L827.0 444.0 L812.0 450.0 L801.0 457.0 L792.0 460.0 L782.0 461.0" fill="none" stroke="#6f8f78" stroke-width="1.4" stroke-linejoin="round"/>
<path d="M826.7 599.2 L806.7 612.5 L793.3 611.7 L783.3 624.2 L773.3 621.7 L770.0 615.8 L760.0 612.5 L758.5 612.2 L746.7 618.0 L743.7 604.8 L743.2 599.4 L740.1 566.9" fill="none" stroke="#6f8f78" stroke-width="1.4" stroke-linejoin="round"/>
<path d="M790.0 614.7 L771.7 617.8 L759.4 611.7 L745.2 617.8" fill="none" stroke="#6f8f78" stroke-width="1.4" stroke-linejoin="round"/>
<path d="M675.6 590.0 L677.0 604.8 L665.2 615.2 L656.3 625.6" fill="none" stroke="#6f8f78" stroke-width="1.4" stroke-linejoin="round"/>
<path d="M675.0 575.0 L676.7 593.3 L673.3 610.0 L665.0 613.3 L661.7 620.0" fill="none" stroke="#6f8f78" stroke-width="1.4" stroke-linejoin="round"/>
<path d="M697.3 521.7 L706.5 514.5 L718.7 507.4" fill="none" stroke="#6f8f78" stroke-width="1.4" stroke-linejoin="round"/>
<path d="M718.7 491.1 L731.0 490.1" fill="none" stroke="#6f8f78" stroke-width="1.4" stroke-linejoin="round"/>
<path d="M759.4 465.6 L753.3 475.8" fill="none" stroke="#6f8f78" stroke-width="1.4" stroke-linejoin="round"/>
<path d="M693.2 541.1 L714.8 538.7" fill="none" stroke="#6f8f78" stroke-width="1.4" stroke-linejoin="round"/>
<path d="M677.5 451 Q681 457 684.8 465.5" fill="none" stroke="#2e6e8e" stroke-width="3.3" stroke-linecap="round"/>
<path d="M754 475.5 Q739 483 734.5 489.5 Q732.5 493 733.5 497" fill="none" stroke="#2e6e8e" stroke-width="3.6" stroke-linecap="round"/>
<path d="M765 498.8 Q757.5 504 757.3 513.5" fill="none" stroke="#2e6e8e" stroke-width="3.3" stroke-linecap="round"/>
<path d="M731.2 567 Q729.5 576 730 586" fill="none" stroke="#2e6e8e" stroke-width="3.8" stroke-linecap="round"/>
<path d="M702.9 569.5 L703.4 575.5" fill="none" stroke="#2e6e8e" stroke-width="2.6" stroke-linecap="round"/>
<path d="M770.6 456.0 L767.6 461.6 L751.3 462.6 L737.0 464.6 L721.8 466.2 L714.8 466.5 L695.6 476.0 L686.1 475.8 L680.0 473.8 L662.6 468.3 L656.0 459.3 L649.6 455.4 L628.9 458.6 L613.7 461.7" fill="none" stroke="#b5462c" stroke-width="2.6" stroke-linecap="round" stroke-linejoin="round"/>
<path d="M613.7 461.7 L618.5 459.3 L628.9 458.6" fill="none" stroke="#b5462c" stroke-width="2.6" stroke-linecap="round" stroke-linejoin="round"/>
<path d="M628.9 460.6 L622.4 469.6 L617.3 484.5 L607.7 494.2" fill="none" stroke="#b5462c" stroke-width="2.6" stroke-linecap="round" stroke-linejoin="round"/>
<path d="M607.7 494.2 L611.3 483.3 L613.7 461.7" fill="none" stroke="#b5462c" stroke-width="2.6" stroke-linecap="round" stroke-linejoin="round"/>
<path d="M770.6 456.0 L773.7 462.6 L779.8 475.8 L783.9 491.1 L785.9 506.4 L785.9 519.6 L781.9 531.9 L780.8 540.0 L776.8 548.5 L774.7 560.7 L770.6 568.9" fill="none" stroke="#b5462c" stroke-width="2.6" stroke-linecap="round" stroke-linejoin="round"/>
<path d="M770.6 456.0 L791.9 459.3 L811.2 471.3 L830.4 488.2 L854.5 502.6" fill="none" stroke="#b5462c" stroke-width="2.6" stroke-linecap="round" stroke-linejoin="round"/>
<path d="M695.6 476.0 L710.6 489.0 L712.6 503.3 L715.6 516.6 L718.7 522.0" fill="none" stroke="#b5462c" stroke-width="2.6" stroke-linecap="round" stroke-linejoin="round"/>
<path d="M739.6 550.0 L745.2 550.6 L757.4 554.6 L766.6 562.8 L770.6 568.9" fill="none" stroke="#b5462c" stroke-width="2.6" stroke-linecap="round" stroke-linejoin="round"/>
<path d="M735.0 558.7 L751.3 560.7 L765.6 561.8" fill="none" stroke="#b5462c" stroke-width="2.6" stroke-linecap="round" stroke-linejoin="round"/>
<path d="M770.6 568.9 L746.2 575.0 L729.9 586.2 L716.7 590.3 L709.5 595.4 L706.5 607.6 L700.9 612.2 L690.2 617.8 L680.0 612.7" fill="none" stroke="#b5462c" stroke-width="2.6" stroke-linecap="round" stroke-linejoin="round"/>
<path d="M728.9 587.2 L737.0 597.4 L743.2 605.6 L753.3 595.4 L765.6 590.3" fill="none" stroke="#b5462c" stroke-width="2.6" stroke-linecap="round" stroke-linejoin="round"/>
<path d="M770.6 568.9 L767.6 581.1 L766.0 591.3 L766.6 601.5 L760.5 604.5" fill="none" stroke="#b5462c" stroke-width="2.6" stroke-linecap="round" stroke-linejoin="round"/>
<path d="M766.6 601.5 L775.7 609.6 L775.7 630.0 L772.6 640.0 L763.0 651.9 L760.0 662.3" fill="none" stroke="#b5462c" stroke-width="2.6" stroke-linecap="round" stroke-linejoin="round"/>
<path d="M774.7 575.0 L779.8 589.3 L777.8 611.7 L775.7 625.0" fill="none" stroke="#b5462c" stroke-width="2.6" stroke-linecap="round" stroke-linejoin="round"/>
<path d="M700.9 612.2 L709.6 601.9 L711.0 593.0 L716.7 590.3" fill="none" stroke="#b5462c" stroke-width="2.6" stroke-linecap="round" stroke-linejoin="round"/>
<circle cx="691.8" cy="401.6" r="6" fill="#000"/>
<circle cx="733.0" cy="379.0" r="6" fill="#000"/>
<circle cx="770.6" cy="456.0" r="6" fill="#000"/>
<circle cx="854.8" cy="503.0" r="6" fill="#000"/>
<circle cx="607.3" cy="495.3" r="6" fill="#000"/>
<circle cx="613.2" cy="462.2" r="6" fill="#000"/>
<circle cx="718.7" cy="522.0" r="6" fill="#000"/>
<circle cx="735.0" cy="562.3" r="6" fill="#000"/>
<circle cx="700.9" cy="612.2" r="6" fill="#000"/>
<circle cx="677.0" cy="637.1" r="6" fill="#000"/>
<circle cx="942.5" cy="507.5" r="6" fill="#000"/>
<circle cx="359.2" cy="455.7" r="5.25" fill="#e56b47" stroke="#3e2410" stroke-width="1.7"/>
<circle cx="420.3" cy="589.6" r="5.25" fill="#e56b47" stroke="#3e2410" stroke-width="1.7"/>
<circle cx="813.6" cy="539.6" r="5.25" fill="#e56b47" stroke="#3e2410" stroke-width="1.7"/>
<circle cx="749.8" cy="485.5" r="5.25" fill="#e56b47" stroke="#3e2410" stroke-width="1.7"/>
<circle cx="613.2" cy="464.3" r="5.25" fill="#e56b47" stroke="#3e2410" stroke-width="1.7"/>
<circle cx="694.6" cy="458.6" r="5.25" fill="#e56b47" stroke="#3e2410" stroke-width="1.7"/>
<circle cx="714.1" cy="464.6" r="5.25" fill="#e56b47" stroke="#3e2410" stroke-width="1.7"/>
<circle cx="597.6" cy="506.0" r="5.25" fill="#e56b47" stroke="#3e2410" stroke-width="1.7"/>
<circle cx="607.3" cy="511.6" r="5.25" fill="#e56b47" stroke="#3e2410" stroke-width="1.7"/>
<circle cx="619.0" cy="508.0" r="5.25" fill="#e56b47" stroke="#3e2410" stroke-width="1.7"/>
<circle cx="619.0" cy="516.2" r="5.25" fill="#e56b47" stroke="#3e2410" stroke-width="1.7"/>
<circle cx="632.3" cy="499.9" r="5.25" fill="#e56b47" stroke="#3e2410" stroke-width="1.7"/>
<circle cx="647.0" cy="503.0" r="5.25" fill="#e56b47" stroke="#3e2410" stroke-width="1.7"/>
<circle cx="644.0" cy="507.0" r="5.25" fill="#e56b47" stroke="#3e2410" stroke-width="1.7"/>
<circle cx="653.1" cy="480.6" r="5.25" fill="#e56b47" stroke="#3e2410" stroke-width="1.7"/>
<circle cx="653.1" cy="486.7" r="5.25" fill="#e56b47" stroke="#3e2410" stroke-width="1.7"/>
<circle cx="661.3" cy="490.7" r="5.25" fill="#e56b47" stroke="#3e2410" stroke-width="1.7"/>
<circle cx="668.4" cy="484.6" r="5.25" fill="#e56b47" stroke="#3e2410" stroke-width="1.7"/>
<circle cx="669.4" cy="496.9" r="5.25" fill="#e56b47" stroke="#3e2410" stroke-width="1.7"/>
<circle cx="660.3" cy="500.9" r="5.25" fill="#e56b47" stroke="#3e2410" stroke-width="1.7"/>
<circle cx="676.6" cy="490.7" r="5.25" fill="#e56b47" stroke="#3e2410" stroke-width="1.7"/>
<circle cx="684.7" cy="484.6" r="5.25" fill="#e56b47" stroke="#3e2410" stroke-width="1.7"/>
<circle cx="690.8" cy="483.6" r="5.25" fill="#e56b47" stroke="#3e2410" stroke-width="1.7"/>
<circle cx="688.8" cy="493.8" r="5.25" fill="#e56b47" stroke="#3e2410" stroke-width="1.7"/>
<circle cx="691.9" cy="498.9" r="5.25" fill="#e56b47" stroke="#3e2410" stroke-width="1.7"/>
<circle cx="686.8" cy="500.9" r="5.25" fill="#e56b47" stroke="#3e2410" stroke-width="1.7"/>
<circle cx="651.1" cy="492.8" r="5.25" fill="#e56b47" stroke="#3e2410" stroke-width="1.7"/>
<circle cx="655.2" cy="496.9" r="5.25" fill="#e56b47" stroke="#3e2410" stroke-width="1.7"/>
<circle cx="669.4" cy="508.0" r="5.25" fill="#e56b47" stroke="#3e2410" stroke-width="1.7"/>
<circle cx="659.3" cy="516.2" r="5.25" fill="#e56b47" stroke="#3e2410" stroke-width="1.7"/>
<circle cx="673.5" cy="516.2" r="5.25" fill="#e56b47" stroke="#3e2410" stroke-width="1.7"/>
<circle cx="681.7" cy="513.1" r="5.25" fill="#e56b47" stroke="#3e2410" stroke-width="1.7"/>
<circle cx="685.7" cy="522.3" r="5.25" fill="#e56b47" stroke="#3e2410" stroke-width="1.7"/>
<circle cx="654.2" cy="522.3" r="5.25" fill="#e56b47" stroke="#3e2410" stroke-width="1.7"/>
<circle cx="666.4" cy="522.3" r="5.25" fill="#e56b47" stroke="#3e2410" stroke-width="1.7"/>
<circle cx="677.6" cy="526.4" r="5.25" fill="#e56b47" stroke="#3e2410" stroke-width="1.7"/>
<circle cx="665.4" cy="530.5" r="5.25" fill="#e56b47" stroke="#3e2410" stroke-width="1.7"/>
<circle cx="676.6" cy="531.5" r="5.25" fill="#e56b47" stroke="#3e2410" stroke-width="1.7"/>
<circle cx="690.8" cy="527.4" r="5.25" fill="#e56b47" stroke="#3e2410" stroke-width="1.7"/>
<circle cx="695.9" cy="533.5" r="5.25" fill="#e56b47" stroke="#3e2410" stroke-width="1.7"/>
<circle cx="640.9" cy="525.4" r="5.25" fill="#e56b47" stroke="#3e2410" stroke-width="1.7"/>
<circle cx="628.7" cy="527.4" r="5.25" fill="#e56b47" stroke="#3e2410" stroke-width="1.7"/>
<circle cx="631.8" cy="531.5" r="5.25" fill="#e56b47" stroke="#3e2410" stroke-width="1.7"/>
<circle cx="634.8" cy="536.6" r="5.25" fill="#e56b47" stroke="#3e2410" stroke-width="1.7"/>
<circle cx="710.6" cy="477.9" r="5.25" fill="#e56b47" stroke="#3e2410" stroke-width="1.7"/>
<circle cx="708.5" cy="482.0" r="5.25" fill="#e56b47" stroke="#3e2410" stroke-width="1.7"/>
<circle cx="684.0" cy="485.0" r="5.25" fill="#e56b47" stroke="#3e2410" stroke-width="1.7"/>
<circle cx="691.2" cy="483.0" r="5.25" fill="#e56b47" stroke="#3e2410" stroke-width="1.7"/>
<circle cx="689.2" cy="494.2" r="5.25" fill="#e56b47" stroke="#3e2410" stroke-width="1.7"/>
<circle cx="691.2" cy="499.3" r="5.25" fill="#e56b47" stroke="#3e2410" stroke-width="1.7"/>
<circle cx="710.6" cy="496.7" r="5.25" fill="#e56b47" stroke="#3e2410" stroke-width="1.7"/>
<circle cx="720.2" cy="499.8" r="5.25" fill="#e56b47" stroke="#3e2410" stroke-width="1.7"/>
<circle cx="686.1" cy="521.7" r="5.25" fill="#e56b47" stroke="#3e2410" stroke-width="1.7"/>
<circle cx="698.3" cy="532.9" r="5.25" fill="#e56b47" stroke="#3e2410" stroke-width="1.7"/>
<circle cx="717.2" cy="528.1" r="5.25" fill="#e56b47" stroke="#3e2410" stroke-width="1.7"/>
<circle cx="718.7" cy="536.8" r="5.25" fill="#e56b47" stroke="#3e2410" stroke-width="1.7"/>
<circle cx="697.8" cy="533.8" r="5.25" fill="#e56b47" stroke="#3e2410" stroke-width="1.7"/>
<circle cx="685.6" cy="522.5" r="5.25" fill="#e56b47" stroke="#3e2410" stroke-width="1.7"/>
<circle cx="690.2" cy="527.1" r="5.25" fill="#e56b47" stroke="#3e2410" stroke-width="1.7"/>
<circle cx="682.0" cy="539.4" r="5.25" fill="#e56b47" stroke="#3e2410" stroke-width="1.7"/>
<circle cx="691.7" cy="542.9" r="5.25" fill="#e56b47" stroke="#3e2410" stroke-width="1.7"/>
<circle cx="681.5" cy="548.5" r="5.25" fill="#e56b47" stroke="#3e2410" stroke-width="1.7"/>
<circle cx="708.0" cy="547.0" r="5.25" fill="#e56b47" stroke="#3e2410" stroke-width="1.7"/>
<circle cx="691.2" cy="553.6" r="5.25" fill="#e56b47" stroke="#3e2410" stroke-width="1.7"/>
<circle cx="708.0" cy="554.6" r="5.25" fill="#e56b47" stroke="#3e2410" stroke-width="1.7"/>
<circle cx="700.4" cy="553.6" r="5.25" fill="#e56b47" stroke="#3e2410" stroke-width="1.7"/>
<circle cx="688.7" cy="563.8" r="5.25" fill="#e56b47" stroke="#3e2410" stroke-width="1.7"/>
<circle cx="700.9" cy="563.3" r="5.25" fill="#e56b47" stroke="#3e2410" stroke-width="1.7"/>
<circle cx="709.0" cy="563.8" r="5.25" fill="#e56b47" stroke="#3e2410" stroke-width="1.7"/>
<circle cx="682.0" cy="568.4" r="5.25" fill="#e56b47" stroke="#3e2410" stroke-width="1.7"/>
<circle cx="683.6" cy="576.0" r="5.25" fill="#e56b47" stroke="#3e2410" stroke-width="1.7"/>
<circle cx="700.9" cy="581.1" r="5.25" fill="#e56b47" stroke="#3e2410" stroke-width="1.7"/>
<circle cx="730.9" cy="545.5" r="5.25" fill="#e56b47" stroke="#3e2410" stroke-width="1.7"/>
<circle cx="722.8" cy="550.6" r="5.25" fill="#e56b47" stroke="#3e2410" stroke-width="1.7"/>
<circle cx="725.8" cy="557.7" r="5.25" fill="#e56b47" stroke="#3e2410" stroke-width="1.7"/>
<circle cx="635.4" cy="537.1" r="5.25" fill="#e56b47" stroke="#3e2410" stroke-width="1.7"/>
<circle cx="646.7" cy="539.6" r="5.25" fill="#e56b47" stroke="#3e2410" stroke-width="1.7"/>
<circle cx="655.0" cy="539.6" r="5.25" fill="#e56b47" stroke="#3e2410" stroke-width="1.7"/>
<circle cx="660.0" cy="539.2" r="5.25" fill="#e56b47" stroke="#3e2410" stroke-width="1.7"/>
<circle cx="665.0" cy="532.5" r="5.25" fill="#e56b47" stroke="#3e2410" stroke-width="1.7"/>
<circle cx="668.3" cy="537.5" r="5.25" fill="#e56b47" stroke="#3e2410" stroke-width="1.7"/>
<circle cx="665.0" cy="545.8" r="5.25" fill="#e56b47" stroke="#3e2410" stroke-width="1.7"/>
<circle cx="680.0" cy="539.2" r="5.25" fill="#e56b47" stroke="#3e2410" stroke-width="1.7"/>
<circle cx="679.6" cy="548.8" r="5.25" fill="#e56b47" stroke="#3e2410" stroke-width="1.7"/>
<circle cx="627.5" cy="531.7" r="5.25" fill="#e56b47" stroke="#3e2410" stroke-width="1.7"/>
<circle cx="639.6" cy="557.5" r="5.25" fill="#e56b47" stroke="#3e2410" stroke-width="1.7"/>
<circle cx="647.1" cy="557.5" r="5.25" fill="#e56b47" stroke="#3e2410" stroke-width="1.7"/>
<circle cx="650.8" cy="550.8" r="5.25" fill="#e56b47" stroke="#3e2410" stroke-width="1.7"/>
<circle cx="655.8" cy="561.7" r="5.25" fill="#e56b47" stroke="#3e2410" stroke-width="1.7"/>
<circle cx="661.7" cy="557.5" r="5.25" fill="#e56b47" stroke="#3e2410" stroke-width="1.7"/>
<circle cx="669.2" cy="555.0" r="5.25" fill="#e56b47" stroke="#3e2410" stroke-width="1.7"/>
<circle cx="676.7" cy="554.2" r="5.25" fill="#e56b47" stroke="#3e2410" stroke-width="1.7"/>
<circle cx="690.8" cy="555.0" r="5.25" fill="#e56b47" stroke="#3e2410" stroke-width="1.7"/>
<circle cx="688.3" cy="563.3" r="5.25" fill="#e56b47" stroke="#3e2410" stroke-width="1.7"/>
<circle cx="700.4" cy="563.8" r="5.25" fill="#e56b47" stroke="#3e2410" stroke-width="1.7"/>
<circle cx="672.5" cy="566.7" r="5.25" fill="#e56b47" stroke="#3e2410" stroke-width="1.7"/>
<circle cx="679.6" cy="569.2" r="5.25" fill="#e56b47" stroke="#3e2410" stroke-width="1.7"/>
<circle cx="683.3" cy="575.8" r="5.25" fill="#e56b47" stroke="#3e2410" stroke-width="1.7"/>
<circle cx="655.8" cy="570.8" r="5.25" fill="#e56b47" stroke="#3e2410" stroke-width="1.7"/>
<circle cx="659.2" cy="577.9" r="5.25" fill="#e56b47" stroke="#3e2410" stroke-width="1.7"/>
<circle cx="656.2" cy="587.1" r="5.25" fill="#e56b47" stroke="#3e2410" stroke-width="1.7"/>
<circle cx="700.4" cy="580.8" r="5.25" fill="#e56b47" stroke="#3e2410" stroke-width="1.7"/>
<circle cx="736.0" cy="379.0" r="5.2" fill="#22c4f4" stroke="#0c3446" stroke-width="1.8"/>
<circle cx="767.6" cy="443.8" r="5.2" fill="#22c4f4" stroke="#0c3446" stroke-width="1.8"/>
<circle cx="730.4" cy="466.2" r="5.2" fill="#22c4f4" stroke="#0c3446" stroke-width="1.8"/>
<circle cx="695.8" cy="476.3" r="5.2" fill="#22c4f4" stroke="#0c3446" stroke-width="1.8"/>
<circle cx="728.9" cy="533.6" r="5.2" fill="#22c4f4" stroke="#0c3446" stroke-width="1.8"/>
<circle cx="739.6" cy="550.0" r="5.2" fill="#22c4f4" stroke="#0c3446" stroke-width="1.8"/>
<circle cx="770.6" cy="568.9" r="5.2" fill="#22c4f4" stroke="#0c3446" stroke-width="1.8"/>
<circle cx="760.0" cy="662.3" r="5.2" fill="#22c4f4" stroke="#0c3446" stroke-width="1.8"/>
<circle cx="778.3" cy="758.0" r="5.2" fill="#22c4f4" stroke="#0c3446" stroke-width="1.8"/>
<circle cx="877.4" cy="573.6" r="5.2" fill="#22c4f4" stroke="#0c3446" stroke-width="1.8"/>
<circle cx="944.1" cy="506.3" r="5.2" fill="#22c4f4" stroke="#0c3446" stroke-width="1.8"/>
</g>
</svg>
</body></html>
